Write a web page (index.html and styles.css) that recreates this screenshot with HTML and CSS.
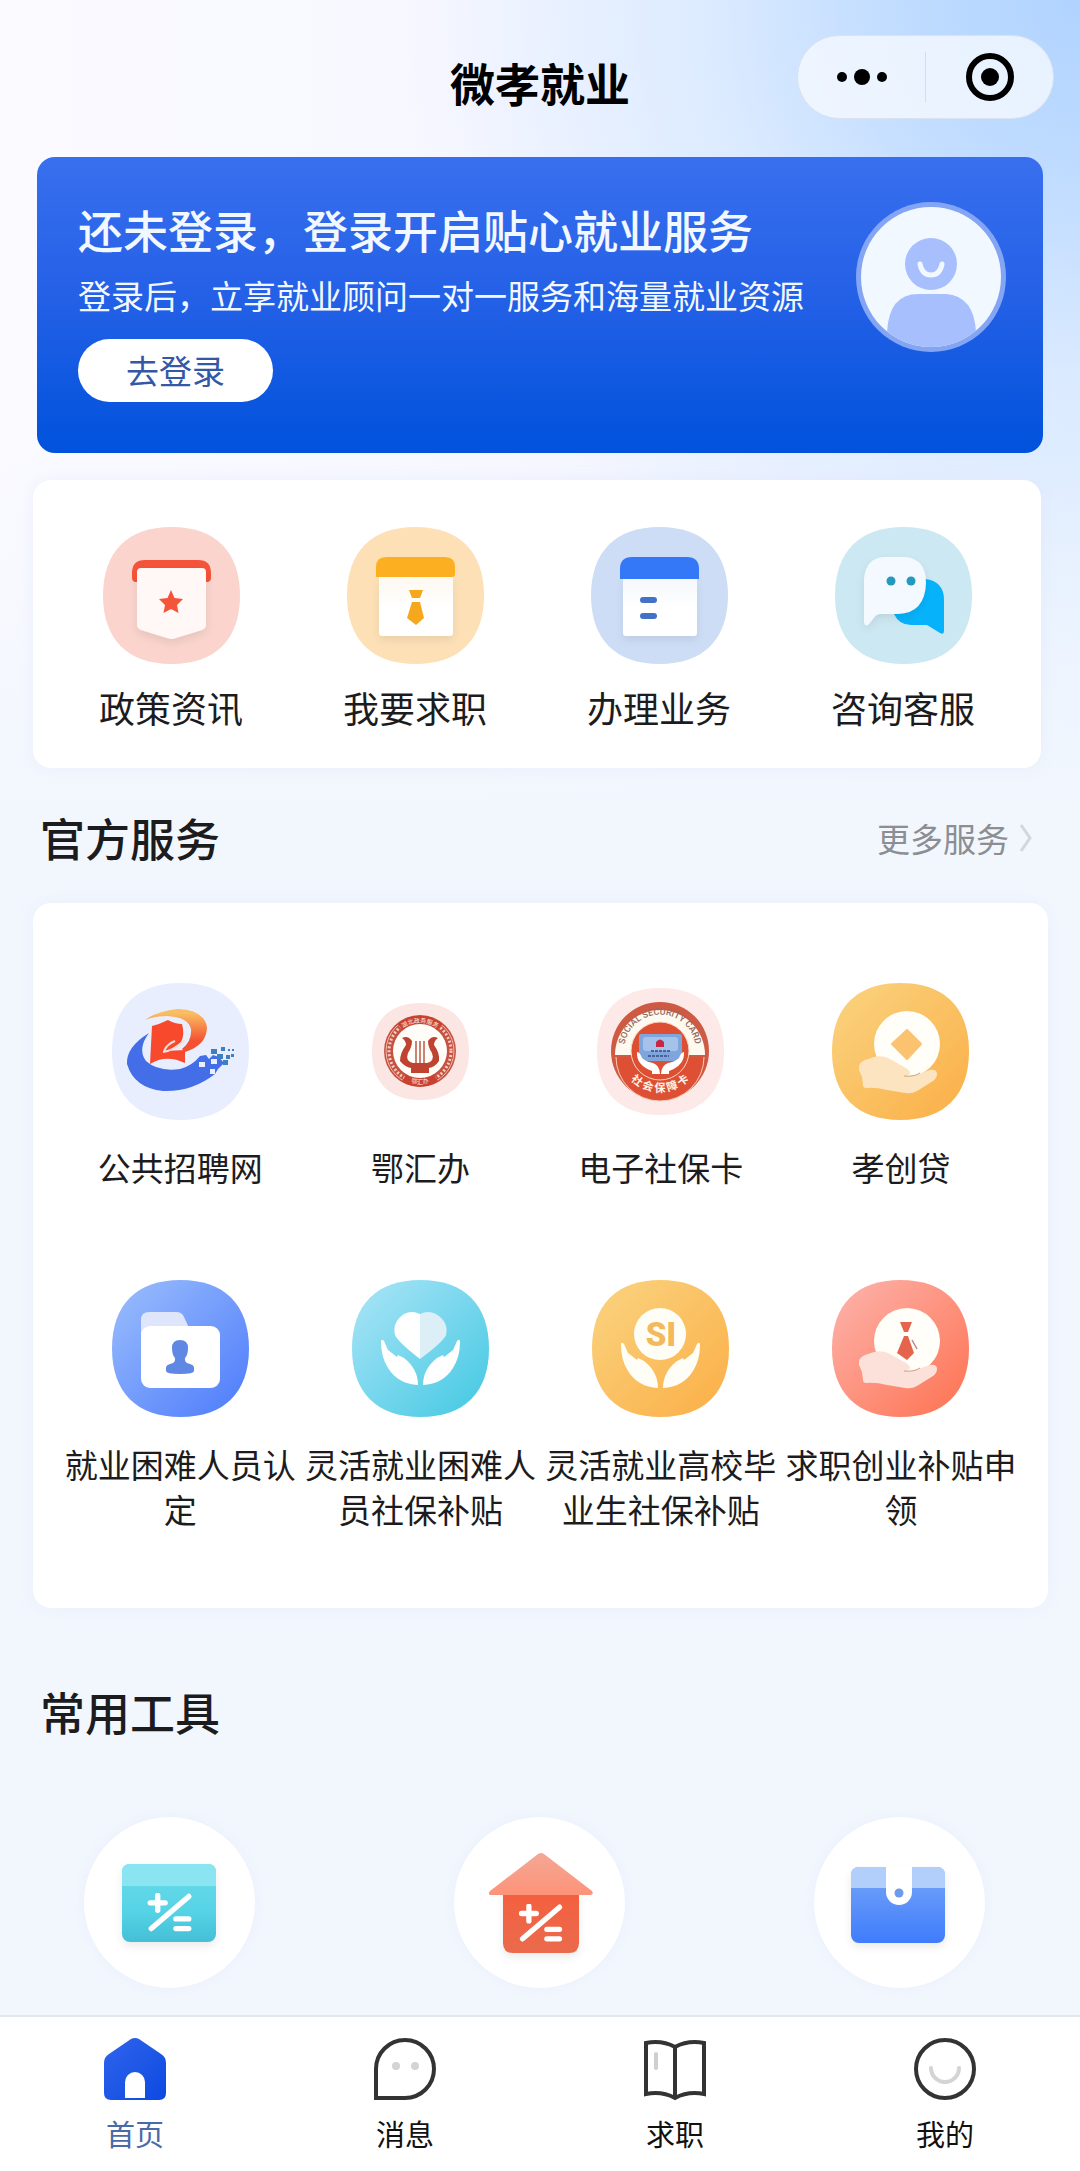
FILE: index.html
```html
<!DOCTYPE html>
<html lang="zh-CN">
<head>
    <meta charset="UTF-8">
    <meta name="viewport" content="width=device-width, initial-scale=1.0">
    <title>微孝就业</title>
    <link rel="stylesheet" href="styles.css">
</head>
<body>
    <!-- shared shapes and gradients -->
    <svg class="defs" width="0" height="0" aria-hidden="true">
        <defs>
            <linearGradient id="gYellow" x1="0" y1="0" x2="1" y2="1"><stop offset="0" stop-color="#fad481"/><stop offset="1" stop-color="#fbae45"/></linearGradient>
            <linearGradient id="gBlue" x1="0" y1="0" x2="1" y2="1"><stop offset="0.1" stop-color="#94b8fd"/><stop offset="0.9" stop-color="#5481fb"/></linearGradient>
            <linearGradient id="gCyan" x1="0" y1="0" x2="1" y2="1"><stop offset="0.1" stop-color="#a2e2f5"/><stop offset="0.9" stop-color="#4ccbe4"/></linearGradient>
            <linearGradient id="gRed" x1="0" y1="0" x2="1" y2="1"><stop offset="0.1" stop-color="#fdaea4"/><stop offset="0.9" stop-color="#fd7859"/></linearGradient>
            <linearGradient id="gPaper" x1="0" y1="0" x2="0" y2="1"><stop offset="0" stop-color="#fff" stop-opacity="0.8"/><stop offset="0.5" stop-color="#fff"/></linearGradient>
            <linearGradient id="gSwoosh" x1="0" y1="0" x2="0" y2="1"><stop offset="0.1" stop-color="#f9bd62"/><stop offset="0.75" stop-color="#f4502f"/></linearGradient>
            <linearGradient id="gCalc" x1="0" y1="0" x2="0" y2="1"><stop offset="0" stop-color="#6cdcea"/><stop offset="0.6" stop-color="#56d3e6"/><stop offset="1" stop-color="#45bfd6"/></linearGradient>
            <linearGradient id="gRoof" x1="0" y1="0" x2="0" y2="1"><stop offset="0" stop-color="#f4a796"/><stop offset="1" stop-color="#fd9379"/></linearGradient>
            <linearGradient id="gWall" x1="0" y1="0" x2="0" y2="1"><stop offset="0" stop-color="#f4603e"/><stop offset="1" stop-color="#ea6a4d"/></linearGradient>
            <linearGradient id="gWallet" x1="0" y1="0" x2="0" y2="1"><stop offset="0" stop-color="#77a6f8"/><stop offset="1" stop-color="#3f7cfb"/></linearGradient>
            <linearGradient id="gHome" x1="0" y1="0" x2="1" y2="1"><stop offset="0" stop-color="#2f63ee"/><stop offset="0.5" stop-color="#1f57e6"/><stop offset="1" stop-color="#0c49e2"/></linearGradient>
            <filter id="soft" x="-20%" y="-20%" width="140%" height="150%"><feDropShadow dx="0" dy="4" stdDeviation="4" flood-opacity="0.08"/></filter>
            <symbol id="squircle" viewBox="0 0 100 100"><path d="M50 0C82 0 100 18 100 50S82 100 50 100 0 82 0 50 18 0 50 0Z"/></symbol>
            <symbol id="hand" viewBox="0 0 137 137"><path d="M27 83Q28 79 33 77L42 74Q49 72 56 75L74 85Q80 89 77 92Q74 94 70 93Q80 94 86 91L98 87Q105 86 105 91Q105 95 101 98L85 108Q80 111 73 110L55 107Q43 104 34 105Q31 105 31 102L30 94L27 87Z"/><path d="M72 93Q82 94 88 90" fill="none" stroke-width="1" stroke="#c9a27c"/></symbol>
            <symbol id="palms" viewBox="0 0 137 137">
                <path d="M29 62Q29 58 32 61L36 70L45 77L46 75L52 78Q66 89 66 105Q46 104 36 88Q29 77 29 62Z"/>
                <path d="M108 62Q108 58 105 61L101 70L92 77L91 75L85 78Q71 89 71 105Q91 104 101 88Q108 77 108 62Z"/>
            </symbol>
            <symbol id="calc" viewBox="0 0 42 36"><path d="M3 9H17M10 2V16M4 33L39 3" fill="none" stroke="#fff" stroke-width="5" stroke-linecap="round"/><path d="M27 24H39M27 33H39" stroke="#fff" stroke-width="5" stroke-linecap="round"/></symbol>
        </defs>
    </svg>

    <header class="topbar">
        <h1 class="topbar-title">微孝就业</h1>
        <div class="capsule">
            <button class="capsule-btn" type="button" aria-label="更多">
                <svg width="52" height="20" viewBox="0 0 52 20"><circle cx="6" cy="10" r="5"/><circle cx="26" cy="10" r="8"/><circle cx="46" cy="10" r="5"/></svg>
            </button>
            <button class="capsule-btn" type="button" aria-label="关闭">
                <svg width="50" height="50" viewBox="0 0 50 50"><circle cx="25" cy="25" r="21" fill="none" stroke="#000" stroke-width="6"/><circle cx="25" cy="25" r="9"/></svg>
            </button>
        </div>
    </header>

    <main class="content">
        <section class="banner">
            <div class="banner-text">
                <h2 class="banner-title">还未登录，登录开启贴心就业服务</h2>
                <p class="banner-desc">登录后，立享就业顾问一对一服务和海量就业资源</p>
                <button class="login-btn" type="button">去登录</button>
            </div>
            <svg class="avatar" viewBox="0 0 150 150" aria-hidden="true">
                <clipPath id="face"><circle cx="75" cy="75" r="70"/></clipPath>
                <circle cx="75" cy="75" r="75" fill="#83a5f4"/>
                <circle cx="75" cy="75" r="70" fill="#f2f8ff"/>
                <g clip-path="url(#face)" fill="#a7bffc">
                    <circle cx="75" cy="62" r="26"/>
                    <path d="M31 150V130Q33 92 62 92H90Q118 94 120 130V150Z"/>
                </g>
                <path d="M64 62Q66 73 75 73T86 62" fill="none" stroke="#f2f8ff" stroke-width="5" stroke-linecap="round"/>
            </svg>
        </section>

        <nav class="card quick" aria-label="快捷入口">
            <a class="entry" href="#">
                <svg class="icon" viewBox="0 0 137 137" aria-hidden="true">
                    <use href="#squircle" fill="#fad4cd"/>
                    <path d="M29 51V46Q29 33 42 33H95Q108 33 108 46V51Q108 54 105 55L102 55V45H35V55L32 55Q29 54 29 51Z" fill="#f4543a"/>
                    <path d="M38 41H99Q103 41 103 45V98Q103 101 99 103L73 111Q68.500 113 64 111L38 103Q34 101 34 98V45Q34 41 38 41Z" fill="#fff8f6" filter="url(#soft)"/>
                    <path d="M68 63L71.500 71 80 72 74 78 75.500 86 68 82 60.500 86 62 78 56 72 64.500 71Z" fill="#f4543a"/>
                </svg>
                <span class="entry-name">政策资讯</span>
            </a>
            <a class="entry" href="#">
                <svg class="icon" viewBox="0 0 137 137" aria-hidden="true">
                    <use href="#squircle" fill="#fde0b6"/>
                    <path d="M32 50H106V106Q106 109 103 109H35Q32 109 32 106Z" fill="url(#gPaper)" filter="url(#soft)"/>
                    <path d="M29 50V40Q29 30 39 30H98Q108 30 108 40V47Q108 50 105 50Z" fill="#fcb021"/>
                    <path d="M62 63H76L73 71H65ZM65 75H73L77 91 69 98 60 91Z" fill="#f5a81e"/>
                </svg>
                <span class="entry-name">我要求职</span>
            </a>
            <a class="entry" href="#">
                <svg class="icon" viewBox="0 0 137 137" aria-hidden="true">
                    <use href="#squircle" fill="#cdddf6"/>
                    <path d="M32 52H106V106Q106 109 103 109H35Q32 109 32 106Z" fill="url(#gPaper)" filter="url(#soft)"/>
                    <path d="M29 52V42Q29 30 41 30H96Q108 30 108 42V52Z" fill="#3478f8"/>
                    <path d="M52 73H63M52 89H63" stroke="#4272c8" stroke-width="6" stroke-linecap="round"/>
                </svg>
                <span class="entry-name">办理业务</span>
            </a>
            <a class="entry" href="#">
                <svg class="icon" viewBox="0 0 137 137" aria-hidden="true">
                    <use href="#squircle" fill="#cce8f2"/>
                    <path d="M90 52Q109 54 109 73V104Q109 108 105 106L92 98H76Q64 98 59 87Z" fill="#06b3fb"/>
                    <path d="M49 30H70Q91 32 91 56Q90 86 63 87H44Q40 88 38 92L33 98Q29 99 29 94V52Q31 31 49 30Z" fill="#f4f9ff" filter="url(#soft)"/>
                    <circle cx="56" cy="54" r="4.500" fill="#2499be"/><circle cx="76" cy="54" r="4.500" fill="#2499be"/>
                </svg>
                <span class="entry-name">咨询客服</span>
            </a>
        </nav>

        <div class="section-head">
            <h2 class="section-title">官方服务</h2>
            <a class="more" href="#">更多服务
                <svg width="14" height="30" viewBox="0 0 14 30" aria-hidden="true"><path d="M2 2L11 15 2 28" fill="none" stroke="#d3d7dc" stroke-width="3"/></svg>
            </a>
        </div>

        <section class="card services">
            <a class="service" href="#">
                <svg class="icon" viewBox="0 0 137 137" aria-hidden="true">
                    <use href="#squircle" fill="#e8eefe"/>
                    <path d="M37 50Q25 66 34 78Q46 89 68 86Q80 83 88 73L94 72 97 76 101 72 107 74 112 80 106 86 103 91Q80 109 51 108Q22 105 15 81Q14 64 37 50Z" fill="#436ee8"/>
                    <path d="M99 66h6v5h-6zM109 64h4v4h-4zM105 71h6v5h-6zM116 66h2v2h-2zM120 66h2v2h-2zM114 72h4v4h-4zM119 71h3v3h-3zM111 77h5v5h-5z" fill="#3f7fc0"/>
                    <path d="M87 79h6v5h-6zM99 76h6v5h-6zM98 86h5v5h-5z" fill="#e8eefe"/>
                    <path d="M33 37Q45 28 66 26Q92 27 95 44Q95 62 73 69L70 66Q80 58 79 46Q76 34 55 33Q43 33 33 37Z" fill="url(#gSwoosh)"/>
                    <path d="M40 43Q48 41 56 37Q63 41 70 41Q73 52 69 59Q62 66 53 68L73 67V80Q54 71 38 81Z" fill="#f8492d"/>
                    <path d="M51 69Q61 68 73 57M52 68Q55 61 63 58" fill="none" stroke="#f6ddd5" stroke-width="2"/>
                </svg>
                <span class="service-name">公共招聘网</span>
            </a>
            <a class="service" href="#">
                <svg class="icon" viewBox="0 0 137 137" aria-hidden="true">
                    <use href="#squircle" x="20" y="20" width="97" height="97" fill="#fbe6e3"/>
                    <circle cx="68" cy="68" r="36" fill="#c65241"/>
                    <circle cx="68" cy="68" r="34" fill="none" stroke="#f3b9a9" stroke-width="1"/>
                    <circle cx="68" cy="68" r="31" fill="none" stroke="#f3cfc3" stroke-width="3" stroke-dasharray="2 2"/>
                    <path d="M48 44A31 31 0 0 1 88 44M52 95A31 31 0 0 0 84 95" fill="none" stroke="#c9412f" stroke-width="8"/>
                    <path id="ehTop" d="M43 54A29 29 0 0 1 93 54" fill="none"/>
                    <path id="ehBottom" d="M48 94A33 33 0 0 0 88 94" fill="none"/>
                    <circle cx="68" cy="68" r="27" fill="#fffdf8"/>
                    <g fill="#fff4e6" font-size="6" text-anchor="middle">
                        <text><textPath href="#ehTop" startOffset="50%">湖北政务服务</textPath></text>
                        <text><textPath href="#ehBottom" startOffset="50%">鄂汇办</textPath></text>
                    </g>
                    <path d="M50 55Q56 52 60 58Q60 64 56 70Q53 78 61 80H75Q83 78 80 70Q76 64 76 58Q80 52 86 55Q82 58 82 62Q88 70 87 78Q83 84 77 85V90H59V85Q53 84 48 78Q48 70 54 62Q54 58 50 55Z" fill="#bf4331"/>
                    <path d="M64 58V80M68 58V80M72 58V80" stroke="#bf5a45" stroke-width="1.500"/>
                </svg>
                <span class="service-name">鄂汇办</span>
            </a>
            <a class="service" href="#">
                <svg class="icon" viewBox="0 0 137 137" aria-hidden="true">
                    <use href="#squircle" x="5" y="5" width="127" height="127" fill="#fce9e8"/>
                    <circle cx="68" cy="68" r="49" fill="#cf5a44"/>
                    <path d="M23 72A45 45 0 1 1 113 72Z" fill="#fffaf0"/>
                    <path d="M24 74A44 44 0 0 0 112 74" fill="#dd5034" stroke="#f8cdb8" stroke-width="1"/>
                    <circle cx="68" cy="68" r="29" fill="#dd4f33" stroke="#f8d5c2" stroke-width="1"/>
                    <path id="cardTop" d="M33 76A36 36 0 1 1 103 76" fill="none"/>
                    <path id="cardBottom" d="M27 76A42 42 0 0 0 109 76" fill="none"/>
                    <text class="seal-en"><textPath href="#cardTop" startOffset="50%">SOCIAL SECURITY CARD</textPath></text>
                    <text class="seal-cn"><textPath href="#cardBottom" startOffset="50%">社 会 保 障 卡</textPath></text>
                    <rect x="47" y="51" width="43" height="27" rx="2" fill="#7fa6dc"/>
                    <rect x="51" y="54" width="35" height="14" rx="3" fill="#a4c2ea"/>
                    <path d="M64 59q4-5 8 0v5h-8z" fill="#c62745"/>
                    <path d="M59 68H78M56 73H77" stroke="#4a6298" stroke-width="2" stroke-dasharray="3 1"/>
                    <path d="M45 69Q48 69 50 75Q54 79 61 80Q68 83 68 91H60V88Q44 82 45 69ZM92 69Q89 69 87 75Q83 79 76 80Q69 83 69 91H77V88Q93 82 92 69Z" fill="#fff"/>
                </svg>
                <span class="service-name">电子社保卡</span>
            </a>
            <a class="service" href="#">
                <svg class="icon" viewBox="0 0 137 137" aria-hidden="true">
                    <use href="#squircle" fill="url(#gYellow)"/>
                    <circle cx="75" cy="61" r="33" fill="#fffef8"/>
                    <path d="M75 47L89 61 75 76 60 61Z" fill="#fbc370" stroke="#fbc370" stroke-width="2" stroke-linejoin="round"/>
                    <use href="#hand" fill="#fce4c0"/>
                </svg>
                <span class="service-name">孝创贷</span>
            </a>
            <a class="service" href="#">
                <svg class="icon" viewBox="0 0 137 137" aria-hidden="true">
                    <use href="#squircle" fill="url(#gBlue)"/>
                    <path d="M29 58V40Q29 32 37 32H64Q70 32 72 37L78 50V58Z" fill="#dfe6fc"/>
                    <rect x="29" y="46" width="79" height="62" rx="9" fill="#fff"/>
                    <path d="M60 68Q60 60 68 60T76 68Q76 75 73 78Q72 83 78 84Q82 85 82 88V91Q82 94 68 94T54 91V88Q54 85 58 84Q64 83 63 78Q60 75 60 68Z" fill="#5f87e4"/>
                </svg>
                <span class="service-name">就业困难人员认定</span>
            </a>
            <a class="service" href="#">
                <svg class="icon" viewBox="0 0 137 137" aria-hidden="true">
                    <use href="#squircle" fill="url(#gCyan)"/>
                    <path d="M68 34Q60 30 52 34Q40 42 43 55Q46 62 68 79Z" fill="#fff"/>
                    <path d="M68 34Q76 30 84 34Q97 42 94 55Q91 62 68 79Z" fill="#ddeff6"/>
                    <use href="#palms" fill="#fff"/>
                </svg>
                <span class="service-name">灵活就业困难人员社保补贴</span>
            </a>
            <a class="service" href="#">
                <svg class="icon" viewBox="0 0 137 137" aria-hidden="true">
                    <use href="#squircle" fill="url(#gYellow)"/>
                    <circle cx="68" cy="54" r="26" fill="#fffef6"/>
                    <text class="si" x="69" y="66">SI</text>
                    <use href="#palms" y="3" fill="#fffef6"/>
                </svg>
                <span class="service-name">灵活就业高校毕业生社保补贴</span>
            </a>
            <a class="service" href="#">
                <svg class="icon" viewBox="0 0 137 137" aria-hidden="true">
                    <use href="#squircle" fill="url(#gRed)"/>
                    <circle cx="75" cy="61" r="33" fill="#fffef8"/>
                    <path d="M68 42H80L76 52H72ZM72 56H76L82 73 75 80 65 73Z" fill="#e5644e"/>
                    <path d="M80 60L85 69" stroke="#b98a80" stroke-width="1.500"/>
                    <use href="#hand" y="-2" fill="#fce0da"/>
                </svg>
                <span class="service-name">求职创业补贴申领</span>
            </a>
        </section>

        <div class="section-head section-head-tools">
            <h2 class="section-title">常用工具</h2>
        </div>

        <section class="tools">
            <a class="tool" href="#" aria-label="社保计算器">
                <svg viewBox="0 0 171 171" aria-hidden="true">
                    <rect x="38" y="47" width="94" height="78" rx="8" fill="url(#gCalc)" filter="url(#soft)"/>
                    <path d="M38 69V55Q38 47 46 47H124Q132 47 132 55V69Z" fill="#8be4f2"/>
                    <use href="#calc" x="63" y="76" width="45" height="39"/>
                </svg>
            </a>
            <a class="tool" href="#" aria-label="房贷计算器">
                <svg viewBox="0 0 171 171" aria-hidden="true">
                    <path d="M49 74H125V126Q125 136 115 136H59Q49 136 49 126Z" fill="url(#gWall)" filter="url(#soft)"/>
                    <path d="M84 37Q87 35 90 37L138 74Q140 78 136 78H38Q33 78 36 74Z" fill="url(#gRoof)"/>
                    <use href="#calc" x="64" y="87" width="45" height="38"/>
                </svg>
            </a>
            <a class="tool" href="#" aria-label="电子钱包">
                <svg viewBox="0 0 171 171" aria-hidden="true">
                    <rect x="37" y="50" width="94" height="76" rx="8" fill="url(#gWallet)" filter="url(#soft)"/>
                    <path d="M37 71V58Q37 50 45 50H123Q131 50 131 58V71Z" fill="#b2cffc"/>
                    <path d="M72 49H98V75A13 13 0 0 1 72 75Z" fill="#fff"/>
                    <circle cx="85" cy="76" r="4.500" fill="#6b9bea"/>
                </svg>
            </a>
        </section>
    </main>

    <nav class="tabbar" aria-label="主导航">
        <a class="tab tab-active" href="#">
            <svg class="tab-icon" viewBox="0 0 64 64" aria-hidden="true">
                <path d="M28 2Q32 0 36 2L58 17Q63 20 63 26V56Q63 63 56 63H8Q1 63 1 56V26Q1 20 6 17Z" fill="url(#gHome)"/>
                <path d="M22 61V45A10 10 0 0 1 42 45V61Z" fill="#fff"/>
            </svg>
            首页
        </a>
        <a class="tab" href="#">
            <svg class="tab-icon" viewBox="0 0 64 64" aria-hidden="true">
                <path d="M3 61V32A29 29 0 0 1 32 3A29 29 0 0 1 32 61Z" fill="none" stroke="#333" stroke-width="4"/>
                <circle cx="23" cy="29" r="4" fill="#d4d4d4"/><circle cx="42" cy="29" r="4" fill="#d4d4d4"/>
            </svg>
            消息
        </a>
        <a class="tab" href="#">
            <svg class="tab-icon" viewBox="0 0 64 64" aria-hidden="true">
                <path d="M32 10Q19 3 3 6V57Q19 54 32 61Q45 54 61 57V6Q45 3 32 10ZM32 10V61" fill="none" stroke="#333" stroke-width="4"/>
                <path d="M13 17V31" stroke="#cfcfcf" stroke-width="4" stroke-linecap="round"/>
            </svg>
            求职
        </a>
        <a class="tab" href="#">
            <svg class="tab-icon" viewBox="0 0 64 64" aria-hidden="true">
                <circle cx="32" cy="32" r="29" fill="none" stroke="#333" stroke-width="4"/>
                <path d="M18 31A14 14 0 0 0 46 31" fill="none" stroke="#d4d4d4" stroke-width="4" stroke-linecap="round"/>
            </svg>
            我的
        </a>
    </nav>
</body>
</html>
```
FILE: styles.css
```css
* {
    box-sizing: border-box;
}

body {
    margin: 0;
    min-height: 100vh;
    display: flex;
    flex-direction: column;
    font-family: "Noto Sans CJK SC", "Noto Sans", sans-serif;
    color: #1c1c1e;
    background-color: #f2f7fe;
    background-image:
        linear-gradient(to bottom, rgba(242,247,254,0) 450px, #f2f7fe 800px),
        radial-gradient(circle at 100% 0, #b0d3ff 0, #c0dcff 180px, rgba(216,233,255,0.8) 380px, rgba(236,243,255,0) 680px),
        linear-gradient(to right, #fafaff 0, #f7f7ff 45%, #e6f0ff 100%);
    background-size: 100% 800px;
    background-repeat: no-repeat;
}

h1, h2, p {
    margin: 0;
}

a {
    color: inherit;
    text-decoration: none;
}

button {
    border: 0;
    padding: 0;
    font-family: inherit;
    cursor: pointer;
}

.defs {
    position: absolute;
}

/* top bar */
.topbar {
    display: grid;
    grid-template-columns: 1fr auto 1fr;
    align-items: end;
    padding: 35px 26px 38px;
}

.topbar-title {
    grid-column: 2;
    font-size: 45px;
    font-weight: 700;
    line-height: 72px;
    color: #000;
}

.capsule {
    justify-self: end;
    display: flex;
    align-items: center;
    width: 257px;
    height: 84px;
    border: 1px solid #d9e2ee;
    border-radius: 42px;
    background: rgba(245,249,255,0.8);
}

.capsule-btn {
    flex: 1;
    height: 50px;
    display: flex;
    align-items: center;
    justify-content: center;
    background: none;
}

.capsule-btn + .capsule-btn {
    border-left: 1px solid #d3deec;
}

/* login banner */
.banner {
    display: flex;
    justify-content: space-between;
    align-items: flex-start;
    margin: 0 37px;
    padding: 45px 37px 51px 41px;
    border-radius: 18px;
    background: linear-gradient(to bottom, #386fee, #2561e7 45%, #0052dc);
    color: #f2f8ff;
}

.banner-title {
    font-size: 45px;
    font-weight: 500;
    line-height: 56px;
}

.banner-desc {
    font-size: 33px;
    line-height: 74px;
}

.login-btn {
    display: block;
    margin-top: 7px;
    width: 195px;
    height: 63px;
    border-radius: 32px;
    background: #fff;
    color: #3558a6;
    font-size: 33px;
    line-height: 63px;
}

.avatar {
    flex: none;
    width: 150px;
    height: 150px;
}

/* cards */
.card {
    display: grid;
    grid-template-columns: repeat(4, 1fr);
    background: #fff;
    border-radius: 18px;
    box-shadow: 0 0 12px rgba(225,232,250,0.5);
}

.icon {
    display: block;
    width: 137px;
    height: 137px;
}

.quick {
    margin: 27px 39px 0 33px;
    padding: 47px 16px 35px;
}

.entry {
    display: flex;
    flex-direction: column;
    align-items: center;
    gap: 17px;
}

.entry-name {
    font-size: 36px;
    line-height: 52px;
}

.section-head {
    display: flex;
    align-items: center;
    justify-content: space-between;
    padding: 40px 47px 35px 40px;
}

.section-head-tools {
    margin-top: 34px;
}

.section-title {
    font-size: 45px;
    font-weight: 500;
    line-height: 60px;
}

.more {
    display: flex;
    align-items: center;
    gap: 10px;
    font-size: 33px;
    line-height: 60px;
    color: #8b8e93;
}

.services {
    margin: 0 32px 0 33px;
    padding: 80px 27px 76px;
    row-gap: 90px;
}

.service {
    display: flex;
    flex-direction: column;
    align-items: center;
    gap: 25px;
    text-align: center;
}

.service-name {
    font-size: 33px;
    line-height: 45px;
}

.seal-en {
    font-family: Roboto, sans-serif;
    font-size: 9px;
    font-weight: 500;
    fill: #8f6a60;
    text-anchor: middle;
}

.seal-cn {
    font-size: 11px;
    font-weight: 700;
    fill: #fff4e8;
    text-anchor: middle;
}

.si {
    font-family: Roboto, sans-serif;
    font-size: 33px;
    font-weight: 900;
    fill: #f3b95d;
    text-anchor: middle;
}

/* tools */
.tools {
    display: grid;
    grid-template-columns: 17fr 20fr 16fr;
    justify-items: center;
    margin-top: 40px;
    padding: 0 21px 26px 0;
}

.tool {
    width: 171px;
    height: 171px;
    border-radius: 50%;
    background: #fff;
    box-shadow: 0 0 8px rgba(225,232,250,0.5);
}

.tool svg {
    display: block;
}

/* bottom tabs */
.tabbar {
    position: sticky;
    bottom: 0;
    display: grid;
    grid-template-columns: repeat(4, 1fr);
    margin-top: auto;
    padding: 20px 0 18px;
    border-top: 2px solid #e3e8ed;
    background: #fff;
}

.tab {
    display: flex;
    flex-direction: column;
    align-items: center;
    gap: 12px;
    font-size: 29px;
    line-height: 40px;
    color: #111;
}

.tab-active {
    color: #4a6ba6;
}

.tab-icon {
    width: 64px;
    height: 64px;
}
```
